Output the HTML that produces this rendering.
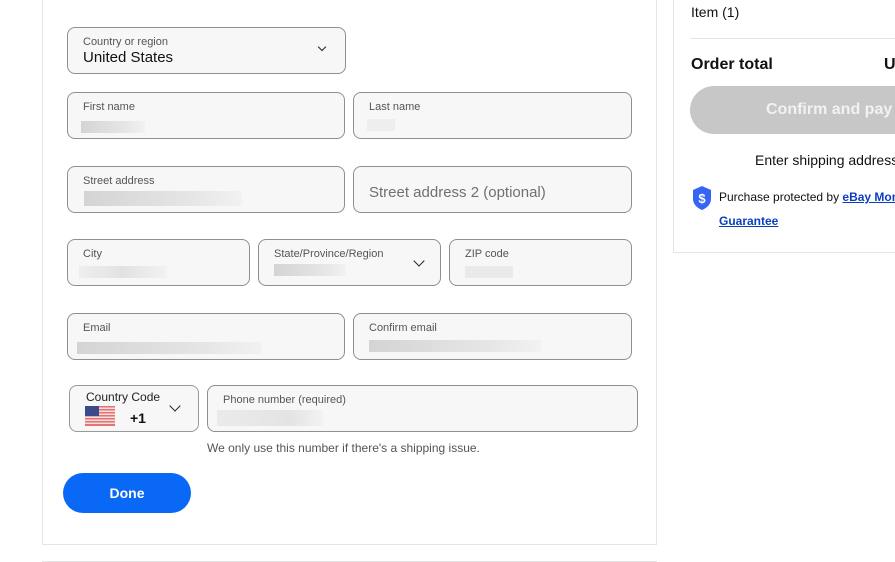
<!DOCTYPE html>
<html><head><style>
html,body{margin:0;width:895px;height:562px;overflow:hidden}
body{background:#fff;font-family:"Liberation Sans",Arial,sans-serif;position:relative;color:#111}
.a{position:absolute}
.f{position:absolute;box-sizing:border-box;border:1px solid #8f8f8f;border-radius:8px;background:#f7f7f7;height:47px}
.l{position:absolute;left:15px;top:8px;font-size:11px;color:#555}
.v{position:absolute;left:15px;top:26px;font-size:15px;color:#111}
.ph{position:absolute;left:15px;top:17px;font-size:15px;color:#707070}
.b{position:absolute;height:12px;background:linear-gradient(90deg,#d4d4d4,#e6e6e6 70%,#f2f2f2)}
.ch{position:absolute;width:7px;height:7px;border-right:1.5px solid #222;border-bottom:1.5px solid #222;transform:rotate(45deg)}
#wrap{position:absolute;left:0;top:0;width:895px;height:562px;overflow:hidden}
</style></head><body><div id="wrap">
<div class="a" style="left:42px;top:-1px;width:613px;height:545px;border:1px solid #e5e5e5;border-top:none"></div>
<div class="a" style="left:42px;top:561px;width:615px;height:1px;background:#e5e5e5"></div>

<div class="f" style="left:67px;top:27px;width:279px"><div class="l">Country or region</div><div class="v" style="top:21px">United States</div><div class="ch" style="left:251px;top:16px;width:5px;height:5px"></div></div>

<div class="f" style="left:67px;top:92px;width:278px"><div class="l">First name</div><div class="b" style="left:13px;top:28px;width:64px"></div></div>
<div class="f" style="left:353px;top:92px;width:279px"><div class="l">Last name</div><div class="b" style="left:13px;top:26px;width:28px;background:#eee"></div></div>

<div class="f" style="left:67px;top:166px;width:278px"><div class="l">Street address</div><div class="b" style="left:16px;top:24px;width:158px;height:15px"></div></div>
<div class="f" style="left:353px;top:166px;width:279px"><div class="ph">Street address 2 (optional)</div></div>

<div class="f" style="left:67px;top:239px;width:183px"><div class="l">City</div><div class="b" style="left:11px;top:26px;width:88px;background:linear-gradient(90deg,#eee,#e2e2e2,#f2f2f2)"></div></div>
<div class="f" style="left:258px;top:239px;width:183px"><div class="l">State/Province/Region</div><div class="b" style="left:15px;top:24px;width:72px"></div><div class="ch" style="left:156px;top:17px"></div></div>
<div class="f" style="left:449px;top:239px;width:183px"><div class="l">ZIP code</div><div class="b" style="left:15px;top:26px;width:48px;background:#eaeaea"></div></div>

<div class="f" style="left:67px;top:313px;width:278px"><div class="l">Email</div><div class="b" style="left:9px;top:28px;width:185px"></div></div>
<div class="f" style="left:353px;top:313px;width:279px"><div class="l">Confirm email</div><div class="b" style="left:15px;top:26px;width:172px"></div></div>

<div class="f" style="left:69px;top:385px;width:130px;border-color:#999"><div class="l" style="left:16px;top:4px;color:#222;font-size:12px">Country Code</div>
<svg class="a" style="left:15px;top:20px" width="30" height="20" viewBox="0 0 30 20"><rect width="30" height="20" fill="#e57373"/><g fill="#f4dede"><rect y="1.5" width="30" height="1.5"/><rect y="4.5" width="30" height="1.5"/><rect y="7.5" width="30" height="1.5"/><rect y="10.5" width="30" height="1.5"/><rect y="13.5" width="30" height="1.5"/><rect y="16.5" width="30" height="1.5"/></g><rect width="14" height="10" fill="#3c4a8a"/></svg>
<div class="a" style="left:60px;top:24px;font-size:14px;font-weight:bold">+1</div>
<div class="ch" style="left:101px;top:16px"></div></div>
<div class="f" style="left:207px;top:385px;width:431px"><div class="l">Phone number (required)</div><div class="b" style="left:9px;top:24px;width:106px;height:16px;background:linear-gradient(90deg,#eaeaea,#e4e4e4 70%,#f3f3f3)"></div></div>
<div class="a" style="left:207px;top:441px;font-size:12px;color:#555">We only use this number if there's a shipping issue.</div>

<div class="a" style="left:63px;top:473px;width:128px;height:40px;border-radius:20px;background:#0968f6;color:#fff;font-weight:bold;font-size:14px;text-align:center;line-height:40px">Done</div>

<div class="a" style="left:673px;top:-1px;width:240px;height:253px;border:1px solid #e5e5e5;border-top:none"></div>
<div class="a" style="left:691px;top:4px;font-size:14px">Item (1)</div>
<div class="a" style="left:690px;top:38px;width:210px;height:1px;background:#e5e5e5"></div>
<div class="a" style="left:691px;top:56px;font-size:16px;font-weight:bold">Order total</div>
<div class="a" style="left:884px;top:56px;font-size:16px;font-weight:bold">U</div>
<div class="a" style="left:690px;top:86px;width:240px;height:48px;border-radius:24px;background:#c7c7c7;color:#f2f2f2;font-weight:bold;font-size:16px;line-height:48px;padding-left:76px;box-sizing:border-box;white-space:nowrap">Confirm and pay</div>
<div class="a" style="left:755px;top:152px;font-size:14px;white-space:nowrap">Enter shipping address</div>
<svg class="a" style="left:692px;top:186px" width="20" height="24" viewBox="0 0 20 24"><path d="M10 0L19 4V13C19 18 15 22 10 24C5 22 1 18 1 13V4Z" fill="#3665f3"/><text x="10" y="17" font-size="13" font-weight="bold" fill="#fff" text-anchor="middle" font-family="Liberation Sans">$</text></svg>
<div class="a" style="left:719px;top:190px;font-size:12px;white-space:nowrap">Purchase protected by <b style="color:#0a3fbf;text-decoration:underline">eBay Money Back</b></div>
<div class="a" style="left:719px;top:214px;font-size:12px;font-weight:bold;color:#0a3fbf;text-decoration:underline">Guarantee</div>
</div></body></html>
